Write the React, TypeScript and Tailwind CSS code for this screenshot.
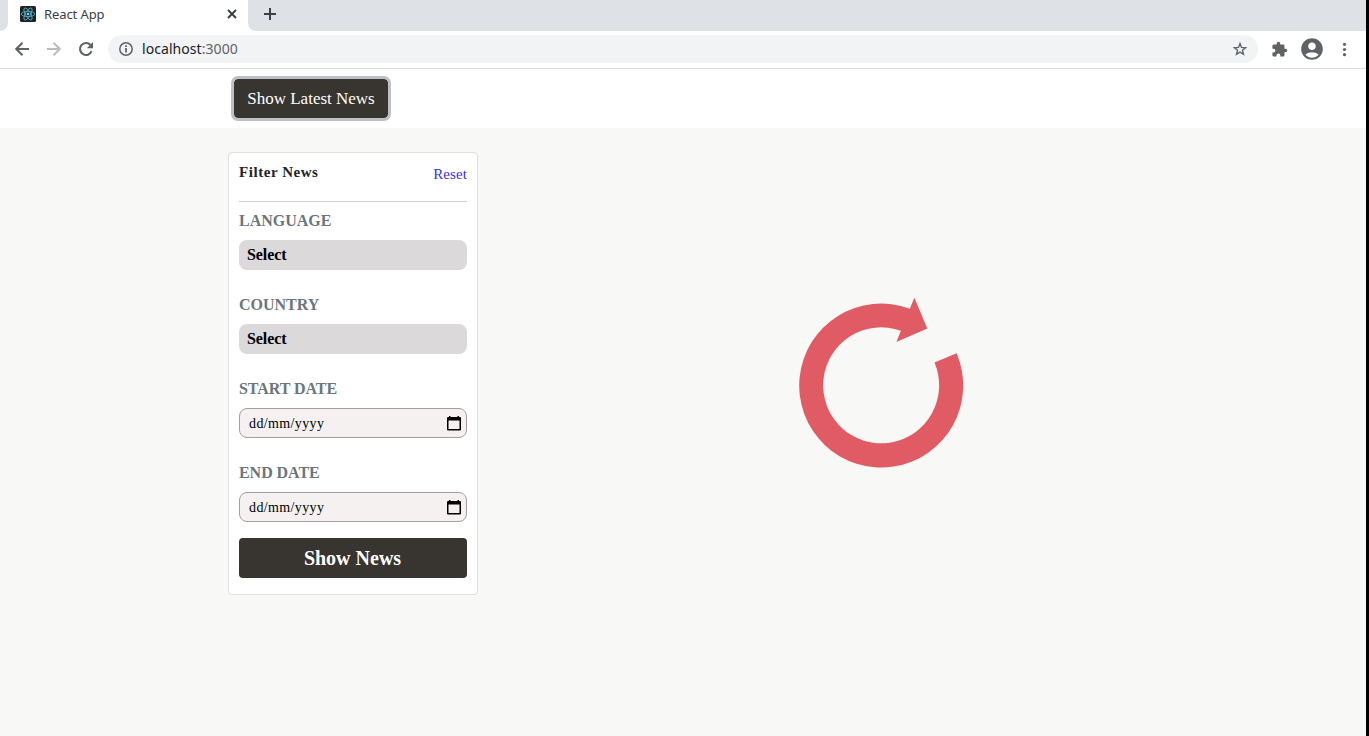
import React from "react";
import { MdAccountCircle, MdExtension } from "react-icons/md";

function ReactFavicon() {
  return (
    <svg width="16" height="16" viewBox="0 0 16 16" className="shrink-0">
      <rect width="16" height="16" rx="1.5" fill="#222222" />
      <g fill="none" stroke="#53b5d0" strokeWidth="0.85">
        <ellipse cx="8" cy="8" rx="6.8" ry="2.6" />
        <ellipse cx="8" cy="8" rx="6.8" ry="2.6" transform="rotate(60 8 8)" />
        <ellipse cx="8" cy="8" rx="6.8" ry="2.6" transform="rotate(120 8 8)" />
      </g>
      <circle cx="8" cy="8" r="1.3" fill="#61dafb" />
    </svg>
  );
}

function LineIcon({ d, className = "" }: { d: string; className?: string }) {
  return (
    <svg
      width="20"
      height="20"
      viewBox="0 0 20 20"
      fill="none"
      stroke="currentColor"
      strokeWidth="2"
      className={`shrink-0 ${className}`}
    >
      <path d={d} />
    </svg>
  );
}

function TabStrip() {
  return (
    <div className="flex h-[31px] bg-[#dee1e6]">
      <div className="w-2 bg-white">
        <div className="h-full rounded-br-lg bg-[#dee1e6]" />
      </div>
      <div className="flex w-[240px] items-center bg-white pb-[3px] pl-3 pr-[6px]">
        <ReactFavicon />
        <span className="ml-2 font-['Noto_Sans',sans-serif] text-[13px] leading-5 tracking-[-0.1px] text-[#3c4043]">
          React App
        </span>
        <LineIcon d="M6 6l8 8M14 6l-8 8" className="ml-auto text-[#3c4043]" />
      </div>
      <div className="w-[300px] bg-white">
        <div className="flex h-full items-center rounded-bl-lg bg-[#dee1e6] pb-[3px] pl-[12px]">
          <LineIcon d="M10 4v12M4 10h12" className="text-[#3c4043]" />
        </div>
      </div>
    </div>
  );
}

function Toolbar() {
  return (
    <div className="flex h-[38px] items-center border-b border-[#dadce0] bg-white pb-px pl-3 text-[#5f6368]">
      <LineIcon d="M17 10H4.5M10.5 3.7L4.2 10l6.3 6.3" />
      <LineIcon d="M3 10h12.5M9.5 3.7l6.3 6.3-6.3 6.3" className="ml-3 text-[#babcbe]" />
      <svg width="20" height="20" viewBox="0 0 20 20" className="ml-3 shrink-0">
        <path
          d="M15.6 12.2A6 6 0 1 1 14.5 6"
          fill="none"
          stroke="currentColor"
          strokeWidth="2.1"
        />
        <path d="M17 3v6.2h-6.2z" fill="currentColor" />
      </svg>
      <div className="ml-[12px] flex h-7 w-[1150px] items-center rounded-full bg-[#f1f3f4] pl-2 pr-2">
        <svg width="20" height="20" viewBox="0 0 20 20" className="shrink-0">
          <circle cx="10" cy="10" r="6.2" fill="none" stroke="currentColor" strokeWidth="1.5" />
          <path d="M9.1 6.2h1.8v1.7H9.1zM9.1 9.1h1.8v4.5H9.1z" fill="currentColor" />
        </svg>
        <span className="ml-[6px] font-['Noto_Sans',sans-serif] text-[14px] leading-5 tracking-[0.06px] text-[#5f6368]">
          <span className="text-[#202124]">localhost</span>:3000
        </span>
        <svg width="20" height="20" viewBox="0 0 20 20" className="ml-auto shrink-0">
          <path
            d="M10 4.6l1.5 3.8 4.1.3-3.1 2.6 1 4L10 13.1l-3.5 2.2 1-4-3.1-2.6 4.1-.3z"
            fill="none"
            stroke="currentColor"
            strokeWidth="1.4"
          />
        </svg>
      </div>
      <MdExtension size={17} className="ml-[13px]" />
      <MdAccountCircle size={26} className="ml-[11px]" />
      <svg width="20" height="20" viewBox="0 0 20 20" className="ml-[9px]">
        <circle cx="10.5" cy="5.3" r="1.6" fill="currentColor" />
        <circle cx="10.5" cy="10.5" r="1.6" fill="currentColor" />
        <circle cx="10.5" cy="15.7" r="1.6" fill="currentColor" />
      </svg>
    </div>
  );
}

function SelectField({ label }: { label: string }) {
  return (
    <div className="h-[84px]">
      <div className="h-[30px] text-[16px] font-bold leading-[22px] text-[#6c757d]">{label}</div>
      <button className="block h-[30px] w-full rounded-lg bg-[#dbd9da] px-2 text-left text-[16px] font-bold leading-[30px] tracking-[-0.08px] text-black">
        Select
      </button>
    </div>
  );
}

function DateField({ label }: { label: string }) {
  return (
    <div className="h-[84px]">
      <div className="h-[30px] text-[16px] font-bold leading-[22px] tracking-[-0.05px] text-[#6c757d]">
        {label}
      </div>
      <div className="flex h-[30px] items-center justify-between rounded-lg border border-[#a59d9f] bg-[#f5f1f1] pl-[9px] pr-[5px] text-[14px] leading-5 text-black">
        <span className="pt-[2px] tracking-[0.38px]">dd/mm/yyyy</span>
        <svg width="14" height="15" viewBox="0 0 14 15">
          <path
            fill="black"
            fillRule="evenodd"
            d="M2 0h1.5v1h7V0H12v1h.9Q14 1 14 2.1v11.3q0 1.1-1.1 1.1H1.1Q0 14.5 0 13.4V2.1Q0 1 1.1 1H2zM1.5 4.6V13h11V4.6z"
          />
        </svg>
      </div>
    </div>
  );
}

function FilterPanel() {
  return (
    <section className="h-[443px] w-[250px] rounded border border-[#dfdfdf] bg-white px-[10px]">
      <div className="flex h-[49px] justify-between border-b border-[#d4cdcf]">
        <h2 className="pt-[10px] text-[15px] font-bold leading-[18px] tracking-[0.55px] text-[#212529]">
          Filter News
        </h2>
        <a className="pt-[12px] text-[15px] leading-[18px] tracking-[0.08px] text-[#3a32d6]">
          Reset
        </a>
      </div>
      <div className="pt-2">
        <SelectField label="LANGUAGE" />
        <SelectField label="COUNTRY" />
        <DateField label="START DATE" />
        <DateField label="END DATE" />
      </div>
      <button className="-mt-[8px] block h-10 w-full rounded bg-[#383430] pr-px text-[20px] font-bold leading-10 text-white">
        Show News
      </button>
    </section>
  );
}

function Spinner() {
  return (
    <svg width="200" height="200" viewBox="0 0 200 200">
      <path
        fill="#e15b64"
        d="M176.6 68.3A82 82 0 1 1 129.8 23.7L134.4 12.8 147.3 43.6 116.4 57 120.9 45.8A58 58 0 1 0 154.5 77.6Z"
      />
    </svg>
  );
}

export default function App() {
  return (
    <div className="flex h-[736px] w-[1369px] flex-col overflow-hidden border-r-[3px] border-black bg-[#f8f8f6] font-['Liberation_Serif',serif]">
      <TabStrip />
      <Toolbar />
      <header className="h-[59px] bg-white pl-[234px] pt-[10px]">
        <button className="block h-[39px] w-[154px] rounded-[4px] bg-[#383430] text-[17px] leading-[39px] text-white outline-[3px] outline-[#bdc1c6]">
          Show Latest News
        </button>
      </header>
      <main className="flex items-start pl-[228px] pt-6">
        <FilterPanel />
        <div className="ml-[302px] mt-[133px]">
          <Spinner />
        </div>
      </main>
    </div>
  );
}
